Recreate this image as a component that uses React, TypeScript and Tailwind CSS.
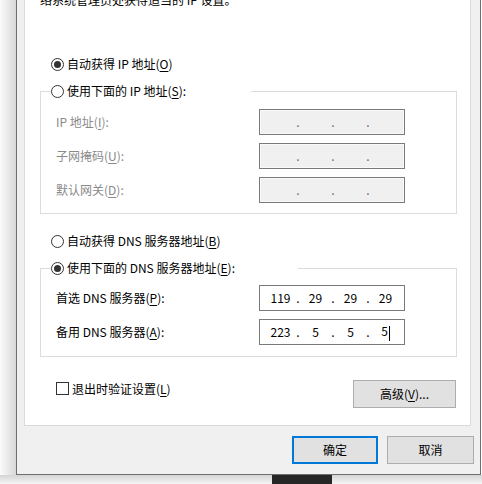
import type { ReactNode } from "react";

function Radio({ checked }: { checked?: boolean }) {
  return (
    <span className="flex h-[13px] w-[13px] shrink-0 items-center justify-center rounded-full border border-[#333333] bg-white">
      {checked && <span className="h-[7px] w-[7px] rounded-full bg-[#333333]" />}
    </span>
  );
}

function Key({ k }: { k: string }) {
  return (
    <>
      (<span className="underline underline-offset-2">{k}</span>)
    </>
  );
}

function RadioRow({ checked, children }: { checked?: boolean; children: ReactNode }) {
  return (
    <div className="flex h-[16px] items-center gap-[3px] whitespace-nowrap">
      <Radio checked={checked} />
      <span>{children}</span>
    </div>
  );
}

function IpBox({
  values,
  disabled,
  cursor,
}: {
  values: string[];
  disabled?: boolean;
  cursor?: boolean;
}) {
  return (
    <div
      className={
        disabled
          ? "flex h-[26px] w-[146px] items-center border border-[#7a7a7a] bg-[#f0f0f0] pl-[6px] text-[#6d6d6d] shadow-[inset_0_0_0_1px_#f9f9f9]"
          : "flex h-[26px] w-[146px] items-center border border-[#7a7a7a] bg-white pl-[6px] text-black"
      }
    >
      {values.map((v, i) => (
        <div key={i} className="flex">
          <span className="w-[29px] text-center">
            {v}
            {cursor && i === 3 && (
              <span className="ml-px inline-block h-[15px] w-px bg-black align-middle" />
            )}
          </span>
          {i < 3 && <span className="w-[6px] text-center">.</span>}
        </div>
      ))}
    </div>
  );
}

function FieldRow({
  label,
  values,
  disabled,
  cursor,
}: {
  label: ReactNode;
  values: string[];
  disabled?: boolean;
  cursor?: boolean;
}) {
  return (
    <div className="flex h-[26px] items-center">
      <span className={disabled ? "w-[218px] pl-[15px] text-[#8a8a8a]" : "w-[218px] pl-[15px]"}>
        {label}
      </span>
      <IpBox values={values} disabled={disabled} cursor={cursor} />
    </div>
  );
}

export default function App() {
  const empty = ["", "", "", ""];

  return (
    <div className="flex h-[484px] w-[482px] flex-col overflow-hidden bg-white font-['Noto_Sans_CJK_SC',sans-serif] text-[12px] leading-[16px] text-black">
      <div className="flex h-[475px] shrink-0">
        <div className="w-[16px] bg-linear-to-r from-[#fbfbfb] to-[#d8d8d8]" />

        <div className="flex w-[465px] flex-col border-x border-b border-[#6e6e6e] bg-[#f0f0f0]">
          <div className="ml-[7px] flex h-[426px] w-[447px] flex-col border-x border-b border-[#dadada] bg-white">
            <p className="-mt-[8px] ml-[15px] h-[16px] whitespace-nowrap">
              络系统管理员处获得适当的 IP 设置。
            </p>

            <div className="ml-[26px] mt-[48px]">
              <RadioRow checked>
                自动获得 IP 地址<Key k="O" />
              </RadioRow>
            </div>

            <fieldset className="ml-[15px] mt-[11px] w-[417px] border border-[#dcdcdc] pb-[10px]">
              <legend className="ml-[10px] w-[200px]">
                <RadioRow>
                  使用下面的 IP 地址<Key k="S" />:
                </RadioRow>
              </legend>
              <div className="mt-[10px] flex flex-col gap-[8px]">
                <FieldRow label={<>IP 地址<Key k="I" />:</>} values={empty} disabled />
                <FieldRow label={<>子网掩码<Key k="U" />:</>} values={empty} disabled />
                <FieldRow label={<>默认网关<Key k="D" />:</>} values={empty} disabled />
              </div>
            </fieldset>

            <div className="ml-[26px] mt-[19px]">
              <RadioRow>
                自动获得 DNS 服务器地址<Key k="B" />
              </RadioRow>
            </div>

            <fieldset className="ml-[15px] mt-[11px] w-[417px] border border-[#dcdcdc] pb-[11px]">
              <legend className="ml-[10px] w-[247px]">
                <RadioRow checked>
                  使用下面的 DNS 服务器地址<Key k="E" />:
                </RadioRow>
              </legend>
              <div className="mt-[9px] flex flex-col gap-[8px]">
                <FieldRow
                  label={<>首选 DNS 服务器<Key k="P" />:</>}
                  values={["119", "29", "29", "29"]}
                />
                <FieldRow
                  label={<>备用 DNS 服务器<Key k="A" />:</>}
                  values={["223", "5", "5", "5"]}
                  cursor
                />
              </div>
            </fieldset>

            <div className="mt-[23px] flex items-start justify-between">
              <div className="ml-[31px] mt-[2px] flex h-[13px] items-center gap-[3px]">
                <span className="h-[13px] w-[13px] border border-[#333333] bg-white" />
                <span>
                  退出时验证设置<Key k="L" />
                </span>
              </div>
              <button className="mr-[14px] h-[28px] w-[103px] border border-[#adadad] bg-[#e1e1e1]">
                高级<Key k="V" />...
              </button>
            </div>
          </div>

          <div className="mr-[6px] mt-[10px] flex justify-end gap-[9px]">
            <button className="h-[28px] w-[86px] border-2 border-[#0078d7] bg-[#e1e1e1]">
              确定
            </button>
            <button className="h-[28px] w-[87px] border border-[#adadad] bg-[#e1e1e1]">
              取消
            </button>
          </div>
        </div>
      </div>

      <div className="h-[9px] bg-linear-to-b from-[#d4d4d4] to-[#f6f6f6]">
        <div className="ml-[272px] h-full w-[60px] bg-[#262626]" />
      </div>
    </div>
  );
}
